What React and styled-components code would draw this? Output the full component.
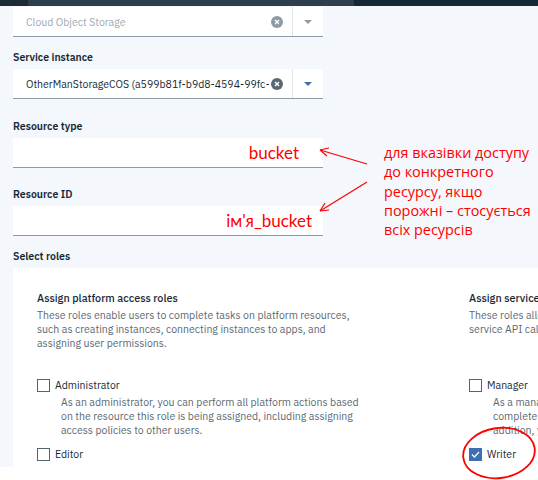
import React from 'react'
import styled, { createGlobalStyle } from 'styled-components'

const GlobalStyle = createGlobalStyle`
  html, body {
    margin: 0;
    padding: 0;
    background: #ffffff;
    overflow: hidden;
  }
  body {
    font-family: 'IBM Plex Sans', Roboto, 'Noto Sans', sans-serif;
    color: #152935;
  }
`

const Shot = styled.div`
  position: relative;
  width: 538px;
  height: 480px;
  background: #ffffff;
`

const Page = styled.div`
  width: 538px;
  height: 467px;
  background: #f4f7fb;
  overflow: hidden;
`

const TopBar = styled.div`
  display: flex;
  height: 6px;
`

const BarPart = styled.div`
  width: ${(p) => p.$w || 'auto'};
  flex: ${(p) => (p.$grow ? 1 : 'none')};
  background: ${(p) => p.$bg};
`

const Form = styled.div`
  padding: 1px 0 0 13px;
`

const Field = styled.div`
  margin-bottom: ${(p) => p.$gap || 13}px;
`

const Label = styled.div`
  font-size: 10.5px;
  font-weight: 600;
  line-height: 14px;
  height: 14px;
  margin-bottom: 5px;
  color: #152935;
`

const SelectBox = styled.div`
  display: flex;
  align-items: center;
  width: 310px;
  height: 29px;
  background: #ffffff;
  border-bottom: 1px solid #8c9ba5;
`

const SelectText = styled.div`
  flex: 1;
  padding-left: 13px;
  white-space: nowrap;
  overflow: hidden;
  font-size: 10.5px;
  color: ${(p) => (p.$muted ? '#a0a9b0' : '#152935')};
`

const ClearIcon = styled.span`
  display: flex;
  align-items: center;
  justify-content: center;
  flex: none;
  width: 12px;
  height: 12px;
  margin: 0 9px 0 2px;
  border-radius: 50%;
  background: ${(p) => (p.$muted ? '#8c9ba5' : '#5a6872')};
`

const Divider = styled.span`
  align-self: stretch;
  width: 1px;
  background: #dfe3e6;
`

const Caret = styled.span`
  display: flex;
  align-items: center;
  justify-content: center;
  width: 30px;

  &::after {
    content: '';
    border-left: 4px solid transparent;
    border-right: 4px solid transparent;
    border-top: 4px solid ${(p) => (p.$active ? '#3d70b2' : '#8c9ba5')};
  }
`

const Row = styled.div`
  display: flex;
  align-items: flex-start;
`

const Inputs = styled.div`
  width: 310px;
`

const InputBox = styled.div`
  display: flex;
  align-items: center;
  justify-content: flex-end;
  width: 310px;
  height: 30px;
  box-sizing: border-box;
  padding-right: ${(p) => p.$pad}px;
  background: #ffffff;
  border-bottom: 1px solid #8c9ba5;
`

const RedText = styled.span`
  font-family: Lato, 'Open Sans', sans-serif;
  font-size: 17px;
  color: #ff0000;
  white-space: nowrap;
`

const Note = styled.div`
  margin: 24px 0 0 61px;
  font-family: 'Open Sans', sans-serif;
  font-size: 14.4px;
  line-height: 19.3px;
  color: #ff0000;
  white-space: nowrap;
`

const Panel = styled.div`
  display: flex;
  gap: 102px;
  padding: 23px 0 0 24px;
  background: #ffffff;
  height: 200px;
  white-space: nowrap;
`

const Column = styled.div`
  flex: none;
  width: ${(p) => p.$w}px;
`

const ColTitle = styled.div`
  font-size: 10.8px;
  font-weight: 500;
  line-height: 14px;
  margin-bottom: 3px;
  color: #152935;
`

const Intro = styled.div`
  height: 42px;
`

const Desc = styled.div`
  font-size: 10.5px;
  line-height: 14px;
  color: #5a6872;
  padding-left: ${(p) => p.$indent || 0}px;
`

const RoleList = styled.div`
  margin-top: 28px;
  display: flex;
  flex-direction: column;
  gap: 10px;
`

const Role = styled.div``

const RoleHead = styled.div`
  display: flex;
  align-items: center;
  gap: 5px;
  height: 14px;
  font-size: 10.5px;
  color: #152935;
  margin-bottom: 3px;
`

const Box = styled.span`
  display: flex;
  align-items: center;
  justify-content: center;
  box-sizing: border-box;
  width: 13px;
  height: 13px;
  border: ${(p) => (p.$checked ? 'none' : '1.5px solid #56646e')};
  background: ${(p) => (p.$checked ? '#3d70b2' : '#ffffff')};
`

const Overlay = styled.svg`
  position: absolute;
  left: 0;
  top: 0;
  width: 538px;
  height: 480px;
  pointer-events: none;
`

const Lines = ({ lines, indent }) =>
  lines.map((l) => (
    <Desc key={l} $indent={indent}>
      {l}
    </Desc>
  ))

const Select = ({ value, muted }) => (
  <SelectBox>
    <SelectText $muted={muted}>{value}</SelectText>
    <ClearIcon $muted={muted}>
      <svg width='6' height='6' viewBox='0 0 6 6'>
        <path d='M1 1L5 5M5 1L1 5' stroke='#fff' strokeWidth='1.4' />
      </svg>
    </ClearIcon>
    <Divider />
    <Caret $active={!muted} />
  </SelectBox>
)

const Check = ({ checked, label }) => (
  <RoleHead>
    <Box $checked={checked}>
      {checked && (
        <svg width='9' height='7' viewBox='0 0 9 7'>
          <path d='M1 3.5L3.4 6L8 1' stroke='#fff' strokeWidth='1.2' fill='none' />
        </svg>
      )}
    </Box>
    {label}
  </RoleHead>
)

const platformRoles = [
  {
    name: 'Administrator',
    lines: [
      'As an administrator, you can perform all platform actions based',
      'on the resource this role is being assigned, including assigning',
      'access policies to other users.',
    ],
  },
  {
    name: 'Editor',
    lines: [
      'As an editor, you can perform all platform actions except for',
      'managing the account and assigning access policies.',
    ],
  },
]

const serviceRoles = [
  {
    name: 'Manager',
    lines: [
      'As a manager, you have permissions beyond the writer role to',
      'complete privileged actions as defined by the service. In',
      'addition, you can create and edit service-specific resources.',
    ],
  },
  {
    name: 'Writer',
    checked: true,
    lines: ['As a writer, you have permissions beyond the reader role.'],
  },
]

const RoleColumn = ({ title, intro, roles }) => (
  <Column $w={330}>
    <ColTitle>{title}</ColTitle>
    <Intro>
      <Lines lines={intro} />
    </Intro>
    <RoleList>
      {roles.map((r) => (
        <Role key={r.name}>
          <Check label={r.name} checked={r.checked} />
          <Lines lines={r.lines} indent={24} />
        </Role>
      ))}
    </RoleList>
  </Column>
)

const App = () => (
  <>
    <GlobalStyle />
    <Shot>
      <Page>
        <TopBar>
          <BarPart $w='28px' $bg='#1d2b37' />
          <BarPart $w='326px' $bg='#2f3e4b' />
          <BarPart $grow $bg='#152835' />
        </TopBar>
        <Form>
          <Field $gap={13}>
            <Select value='Cloud Object Storage' muted />
          </Field>
          <Field $gap={20}>
            <Label>Service instance</Label>
            <Select value='OtherManStorageCOS (a599b81f-b9d8-4594-99fc-2f1e0c8a7d31)' />
          </Field>
          <Row>
            <Inputs>
              <Field $gap={19}>
                <Label>Resource type</Label>
                <InputBox $pad={24}>
                  <RedText>bucket</RedText>
                </InputBox>
              </Field>
              <Field $gap={13}>
                <Label>Resource ID</Label>
                <InputBox $pad={11}>
                  <RedText>ім'я_bucket</RedText>
                </InputBox>
              </Field>
            </Inputs>
            <Note>
              для вказівки доступу
              <br />
              до конкретного
              <br />
              ресурсу, якщо
              <br />
              порожні – стосується
              <br />
              всіх ресурсів
            </Note>
          </Row>
          <Label>Select roles</Label>
          <Panel>
            <RoleColumn
              title='Assign platform access roles'
              intro={[
                'These roles enable users to complete tasks on platform resources,',
                'such as creating instances, connecting instances to apps, and',
                'assigning user permissions.',
              ]}
              roles={platformRoles}
            />
            <RoleColumn
              title='Assign service access roles'
              intro={[
                'These roles allow users to perform tasks within the service,',
                'service API calls and actions in the service dashboard.',
              ]}
              roles={serviceRoles}
            />
          </Panel>
        </Form>
      </Page>
      <Overlay viewBox='0 0 538 480'>
        <g stroke='#ff0000' strokeWidth='1.2' fill='none'>
          <path d='M367 164L320 150' />
          <path d='M320 150L329 148M320 150L327 156' />
          <path d='M367 182L320 211' />
          <path d='M320 211L325 203M320 211L329 210' />
        </g>
        <ellipse
          cx='499'
          cy='453'
          rx='36'
          ry='25'
          transform='rotate(-8 499 453)'
          stroke='#ff0000'
          strokeWidth='1.8'
          fill='none'
        />
      </Overlay>
    </Shot>
  </>
)

export default App
